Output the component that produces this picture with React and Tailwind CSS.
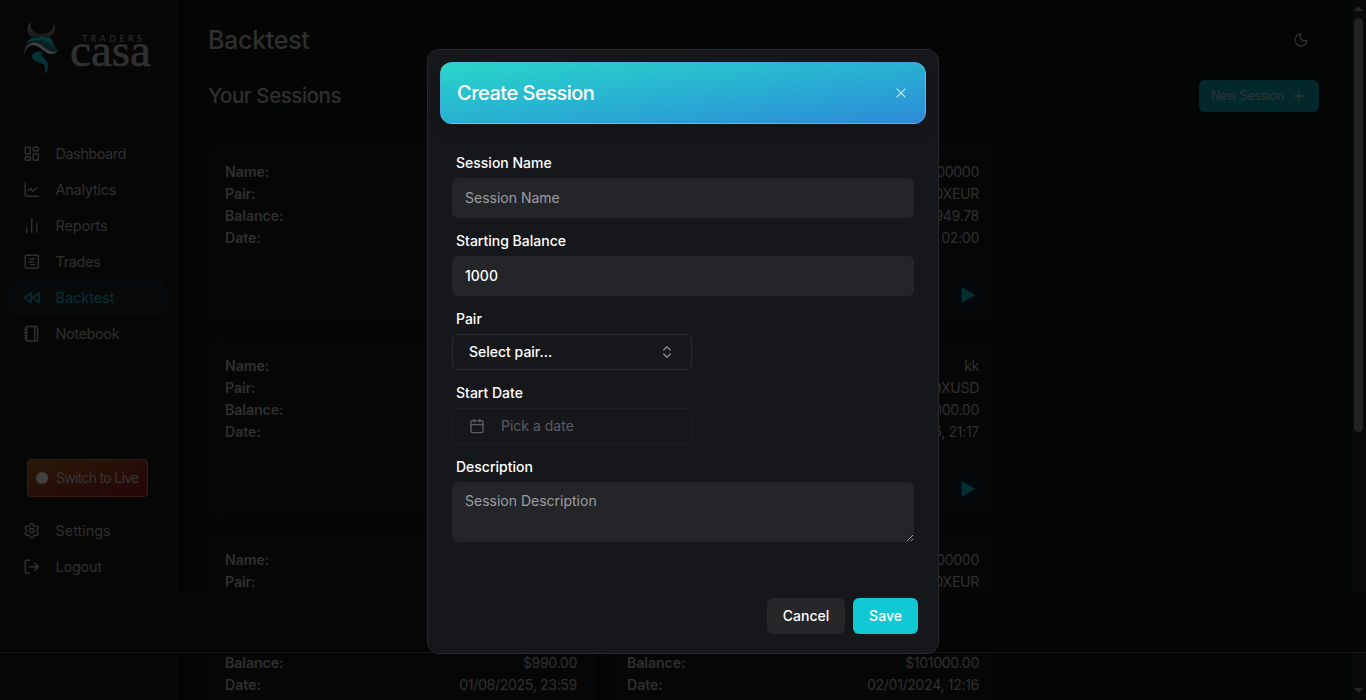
import {
  LayoutDashboard, ChartLine, ChartNoAxesColumn, SquareChartGantt, Notebook,
  Settings, LogOut, Moon, Plus, X, ChevronsUpDown, Calendar,
} from "lucide-react";

function RewindIcon({ size, strokeWidth }) {
  return (
    <svg width={size} height={size} viewBox="0 0 24 24" fill="none" stroke="currentColor" strokeWidth={strokeWidth} strokeLinecap="round" strokeLinejoin="round">
      <polygon points="11 19 2 12 11 5 11 19" />
      <polygon points="22 19 13 12 22 5 22 19" />
    </svg>
  );
}

const NAV = [
  { label: "Dashboard", icon: LayoutDashboard, tracking: "tracking-[-0.5px]" },
  { label: "Analytics", icon: ChartLine, tracking: "tracking-[-0.25px]" },
  { label: "Reports", icon: ChartNoAxesColumn, tracking: "tracking-[-0.15px]" },
  { label: "Trades", icon: SquareChartGantt, tracking: "tracking-[-0.4px]" },
  { label: "Backtest", icon: RewindIcon, active: true, tracking: "tracking-[-0.05px]" },
  { label: "Notebook", icon: Notebook, tracking: "tracking-[-0.4px]" },
];

const SESSIONS = [
  { name: "Test", pair: "EURUSD", balance: "", date: "" },
  { name: "100000", pair: "DXEUR", balance: "$949.78", date: "02:00" },
  { name: "Demo", pair: "EURUSD", balance: "", date: "" },
  { name: "kk", pair: "DXUSD", balance: "$1000.00", date: "2025, 21:17" },
  { name: "Swing", pair: "EURUSD", balance: "$990.00", date: "01/08/2025, 23:59", split: true },
  { name: "100000", pair: "DXEUR", balance: "$101000.00", date: "02/01/2024, 12:16", split: true },
];

function Logo() {
  return (
    <svg width="132" height="56" viewBox="0 0 132 56" className="block">
      <defs>
        <linearGradient id="horn" x1="0" y1="0" x2="0" y2="1">
          <stop offset="0" stopColor="#303030" />
          <stop offset="1" stopColor="#171717" />
        </linearGradient>
        <linearGradient id="face" x1="0" y1="1" x2="1" y2="0">
          <stop offset="0" stopColor="#0a0d0e" />
          <stop offset="0.45" stopColor="#08191b" />
          <stop offset="1" stopColor="#053c40" />
        </linearGradient>
      </defs>
      <path d="M1 35C0 25 7 17 16 16C24 15 29 18 31 25L35 31C30 34 26 32 20 28C12 22 4 26 1 35Z" fill="url(#face)" />
      <path d="M3 24C7 17 15 15 20 16C27 16 30 20 31 26C25 22 22 19 16 20C11 20 6 21 3 24Z" fill="#053a3e" />
      <path d="M8 1C2 8 4 16 11 18C15 19 17 17 19 16C22 19 27 18 29 15C32 12 33 8 31 4C31 10 26 13 20 14C13 14 5 10 8 1Z" fill="url(#horn)" />
      <path d="M1 34C2 25 8 21 14 23C21 26 24 31 30 32C33 32 34 31 35 30C33 34 28 35 24 33C18 29 13 23 7 25.500C3 28 2 31 1 34Z" fill="#404040" />
      <path d="M20 32C12 30 7 34 10 39C13 43 20 42 22 46C23 49 21 51 22 54C26 49 26 43 22 39C19 36 16 35 20 32Z" fill="#053437" />
      <text x="59" y="21.5" fontFamily="Lato" fontSize="9" fill="#303030" textLength="60" lengthAdjust="spacing">TRADERS</text>
      <text x="47" y="46" fontFamily="Liberation Serif" fontSize="46" fill="#303030" stroke="#303030" strokeWidth="0.7" textLength="81" lengthAdjust="spacingAndGlyphs">casa</text>
    </svg>
  );
}

function NavItem({ label, icon: Icon, active, tracking }) {
  return (
    <div className={`mx-2 flex h-9 w-[159px] items-center gap-[15px] rounded-lg pl-[15px] text-[14.5px] ${tracking} ${active ? "bg-[#07090b] text-[#043234]" : "text-[#303030]"}`}>
      <Icon size={17.5} strokeWidth={2} />
      <span>{label}</span>
    </div>
  );
}

function Sidebar() {
  return (
    <aside className="flex w-[177px] shrink-0 flex-col border-r border-[#0a0a0a] bg-[#060606]">
      <div className="h-[136px] pt-5 pl-[23px]"><Logo /></div>
      <nav>{NAV.map((n) => <NavItem key={n.label} {...n} />)}</nav>
      <div className="mt-[107px] mb-4 ml-[27px] flex h-[38px] w-[121px] items-center gap-2 rounded border border-[#35200f] bg-linear-to-br from-[#2a1808] to-[#230607] pl-[8px] text-[14px] tracking-[-0.7px] whitespace-nowrap text-[#3b3533]">
        <span className="size-[12px] shrink-0 rounded-full bg-[#404040]" />
        <span className="pb-px">Switch to Live</span>
      </div>
      <NavItem label="Settings" icon={Settings} tracking="tracking-[-0.05px]" />
      <NavItem label="Logout" icon={LogOut} tracking="tracking-[-0.25px]" />
    </aside>
  );
}

function Row({ label, value }) {
  return (
    <div className="flex h-[22px] items-center justify-between">
      <span className="font-semibold tracking-[-0.1px]">{label}</span>
      <span className="tracking-[-0.38px]">{value}</span>
    </div>
  );
}

function SessionCard({ name, pair, balance, date, split }) {
  return (
    <div className={`flex flex-col rounded-xl border border-[#090909] bg-[#060606] p-4 pt-[15px] text-[14.2px] text-[#303030] ${split ? "h-[237px]" : "h-[178px]"}`}>
      <Row label="Name:" value={name} />
      <Row label="Pair:" value={pair} />
      {split && <div className="h-[59px]" />}
      <Row label="Balance:" value={balance} />
      <Row label="Date:" value={date} />
      <div className="-mr-1 -mb-1 flex flex-1 items-end justify-end">
        <div className="flex size-[31px] items-center justify-center rounded-full bg-[#04090b]">
          <svg width="14" height="16" viewBox="0 0 14 16"><path d="M1.5 1.5L12.5 8L1.5 14.5Z" fill="#053033" stroke="#053033" strokeWidth="2" strokeLinejoin="round" /></svg>
        </div>
      </div>
    </div>
  );
}

function Scrollbar() {
  return (
    <div className="flex w-[15px] shrink-0 flex-col items-center bg-[#090909]">
      <svg width="9" height="18" viewBox="0 0 9 18"><path d="M0 11L4.5 6L9 11Z" fill="#262626" /></svg>
      <div className="h-[414px] w-[9px] rounded-full bg-[#222222]" />
      <div className="flex-1" />
      <svg width="9" height="13" viewBox="0 0 9 13"><path d="M0 1L4.5 6L9 1Z" fill="#262626" /></svg>
    </div>
  );
}

function Label({ children }) {
  return <label className="mb-[5px] ml-1 block h-5 text-[14px] leading-5 font-medium text-white">{children}</label>;
}

function Modal() {
  return (
    <div className="absolute top-[48.5px] left-[427px] flex h-[605px] w-[512px] flex-col rounded-xl border border-[#27282c] bg-[#16171b] px-3 pt-[12.5px]">
      <div className="flex h-[62px] shrink-0 items-center justify-between rounded-xl border border-white/15 bg-linear-to-br from-[#2ad6c8] to-[#2d8ad8] pr-4 pl-4 shadow-lg">
        <h2 className="text-[20px] font-medium tracking-[-0.5px] text-white">Create Session</h2>
        <X size={16} strokeWidth={1.6} className="text-[#bfe6f5]" />
      </div>
      <form className="flex flex-col gap-[13px] px-3 pt-[29px] text-[14px]">
        <div>
          <Label>Session Name</Label>
          <div className="flex h-10 items-center rounded-md bg-[#242529] px-[13px] pb-px text-[#9d9ea4]">Session Name</div>
        </div>
        <div>
          <Label>Starting Balance</Label>
          <div className="flex h-10 items-center rounded-md bg-[#242529] px-[13px] pb-px font-medium text-white">1000</div>
        </div>
        <div>
          <Label>Pair</Label>
          <div className="flex h-9 w-60 items-center justify-between rounded-md border border-[#2a2b2f] px-4 font-medium text-white">
            <span className="pb-px">Select pair...</span>
            <ChevronsUpDown size={16} strokeWidth={2} className="text-[#8b8c8e]" />
          </div>
        </div>
        <div>
          <Label>Start Date</Label>
          <div className="flex h-9 w-60 items-center gap-4 rounded-md border border-[#202125] px-4 text-[#5b5c60]">
            <Calendar size={16} strokeWidth={2} />
            <span className="pb-px">Pick a date</span>
          </div>
        </div>
        <div>
          <Label>Description</Label>
          <textarea placeholder="Session Description" className="block h-[60px] w-full resize rounded-md bg-[#242529] px-[13px] py-[9px] text-[14px] leading-5 placeholder:text-[#9d9ea4]" />
        </div>
      </form>
      <div className="mt-14 flex justify-end gap-2 pr-2 text-[14px] font-medium text-white">
        <button className="h-9 w-[78px] rounded-md bg-[#27272a] pb-px">Cancel</button>
        <button className="h-9 w-[65px] rounded-md bg-[#11c8d5] pb-px">Save</button>
      </div>
    </div>
  );
}

export default function App() {
  return (
    <div className="relative flex h-[700px] w-[1366px] overflow-hidden bg-[#030604] font-['Inter',sans-serif]">
      <Sidebar />
      <main className="flex-1 pr-8 pl-[31px]">
        <header className="flex h-20 items-center justify-between text-[#303030]">
          <h1 className="pt-0.5 text-[25px] font-medium tracking-[-0.3px]">Backtest</h1>
          <div className="flex size-9 items-center justify-center rounded-lg border border-[#080a09]"><Moon size={16} /></div>
        </header>
        <div className="flex h-[49px] items-start justify-between border-b border-[#080b09] text-[#303030]">
          <h2 className="text-[20.5px] leading-8 font-medium tracking-[-0.45px]">Your Sessions</h2>
          <button className="flex h-8 w-[120px] items-center justify-between rounded-md bg-[#03282c] pr-3 pl-3 text-[12.5px] tracking-[-0.35px] whitespace-nowrap text-[#303637]">
            New Session <Plus size={16} strokeWidth={2} />
          </button>
        </div>
        <section className="mt-4 grid grid-cols-[386px_386px] gap-4">
          {SESSIONS.map((s, i) => <SessionCard key={i} {...s} />)}
        </section>
      </main>
      <Scrollbar />
      <div className="absolute top-[593px] left-0 flex h-[60px] w-full">
        <div className="w-[600px] border-b border-[#16161b] bg-[#060606]" />
        <div className="flex-1 border-b border-[#131616] bg-[#030604]" />
      </div>
      <Modal />
    </div>
  );
}
